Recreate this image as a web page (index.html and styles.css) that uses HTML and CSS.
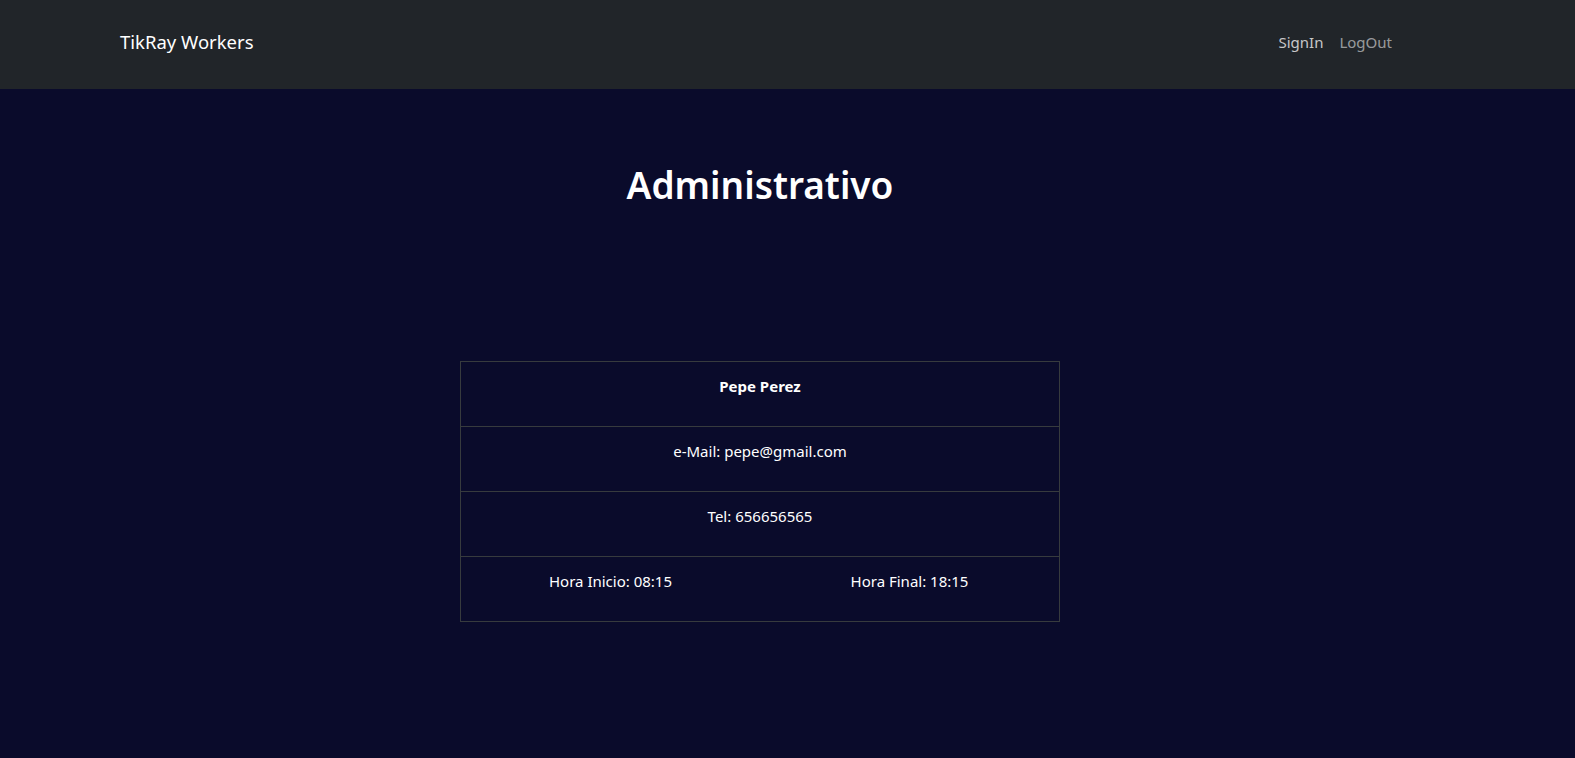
FILE: index.html
```html
<!DOCTYPE html>
<html lang="es">
<head>
<meta charset="utf-8">
<title>TikRay Workers</title>
<link rel="stylesheet" href="styles.css">
</head>
<body>
<nav class="navbar">
  <a class="brand" href="#">TikRay Workers</a>
  <div class="nav-links">
    <a class="nav-link active" href="#">SignIn</a>
    <a class="nav-link" href="#">LogOut</a>
  </div>
</nav>
<main class="main">
  <h1 class="title">Administrativo</h1>
  <table class="card-table">
    <tr><th colspan="2">Pepe Perez</th></tr>
    <tr><td colspan="2">e-Mail: pepe@gmail.com</td></tr>
    <tr><td colspan="2">Tel: 656656565</td></tr>
    <tr><td>Hora Inicio: 08:15</td><td>Hora Final: 18:15</td></tr>
  </table>
</main>
</body>
</html>
```
FILE: styles.css
```css
* { box-sizing: border-box; }
html, body { margin: 0; padding: 0; }
body {
  background: #0a0b2b;
  color: #fff;
  font-family: "Noto Sans", "Open Sans", sans-serif;
  font-size: 15px;
  line-height: 24px;
  min-height: 758px;
}
.navbar {
  background: #212529;
  height: 89px;
  display: flex;
  align-items: center;
  justify-content: space-between;
  padding: 0 183px 5px 120px;
}
.brand {
  color: #fff;
  text-decoration: none;
  font-size: 18.5px;
  line-height: 30px;
}
.nav-links { display: flex; gap: 16px; }
.nav-link {
  text-decoration: none;
  color: rgba(255,255,255,0.55);
  font-size: 15px;
}
.nav-link.active { color: rgba(255,255,255,0.75); }
.main {
  display: flex;
  flex-direction: column;
  align-items: center;
  padding-right: 55px;
}
.title {
  margin: 72px 0 0;
  font-size: 37px;
  line-height: 48px;
  font-weight: 600;
}
.card-table {
  margin-top: 152px;
  width: 600px;
  border-collapse: collapse;
  table-layout: fixed;
  border: 1px solid #373b3e;
}
.card-table th, .card-table td {
  border-top: 1px solid #373b3e;
  text-align: center;
  padding: 12px 8px 28px;
  height: 65px;
  vertical-align: top;
}
.card-table th { font-weight: 700; }
```
